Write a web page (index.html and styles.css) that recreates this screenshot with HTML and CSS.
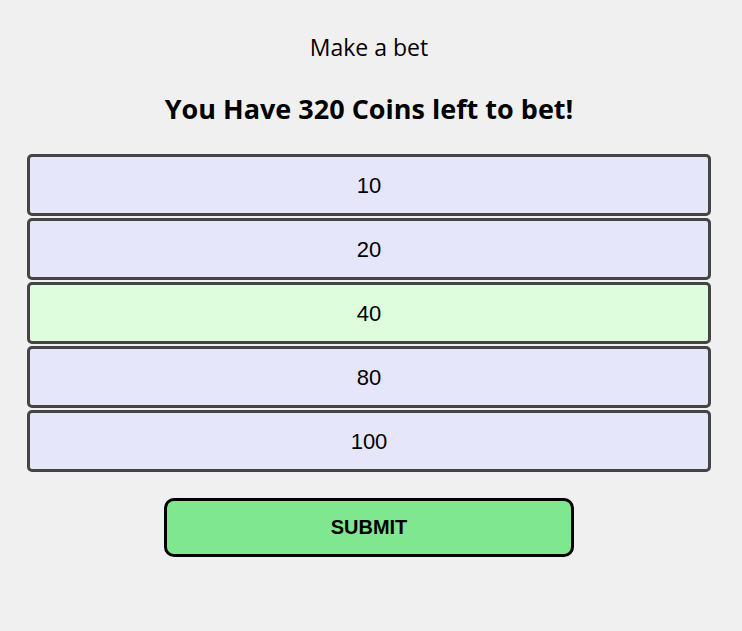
FILE: index.html
```html
<!DOCTYPE html>
<html>
<head>
<meta charset="utf-8">
<link rel="stylesheet" href="styles.css">
</head>
<body>
<main class="page">
  <p class="title">Make a bet</p>
  <h2 class="coins">You Have 320 Coins left to bet!</h2>
  <div class="options">
    <button class="option">10</button>
    <button class="option">20</button>
    <button class="option selected">40</button>
    <button class="option">80</button>
    <button class="option">100</button>
  </div>
  <button class="submit">SUBMIT</button>
</main>
</body>
</html>
```
FILE: styles.css
```css
html, body {
  margin: 0;
  padding: 0;
  background: #f0f0f0;
}
.page {
  display: flex;
  flex-direction: column;
  align-items: center;
  padding: 33px 31px 0 27px;
  font-family: "Open Sans", "Noto Sans", sans-serif;
  color: #000;
}
.title {
  margin: 0;
  font-size: 23px;
  line-height: 28px;
}
.coins {
  margin: 31px 0 0;
  font-size: 27px;
  line-height: 34px;
  font-weight: 700;
}
.options {
  align-self: stretch;
  display: flex;
  flex-direction: column;
  gap: 2px;
  margin-top: 28px;
}
.option {
  height: 62px;
  border: 3px solid #444;
  border-radius: 5px;
  background: #e6e6fa;
  font-family: "Liberation Sans", Arial, sans-serif;
  font-size: 22px;
  color: #000;
  padding: 1px 0 0;
}
.option.selected {
  background: #ddfddd;
}
.submit {
  margin-top: 26px;
  width: 410px;
  height: 59px;
  border: 3px solid #000;
  border-radius: 10px;
  background: #7ee78f;
  font-family: "Liberation Sans", Arial, sans-serif;
  font-size: 20px;
  font-weight: 700;
  color: #000;
  padding: 0;
}
```
